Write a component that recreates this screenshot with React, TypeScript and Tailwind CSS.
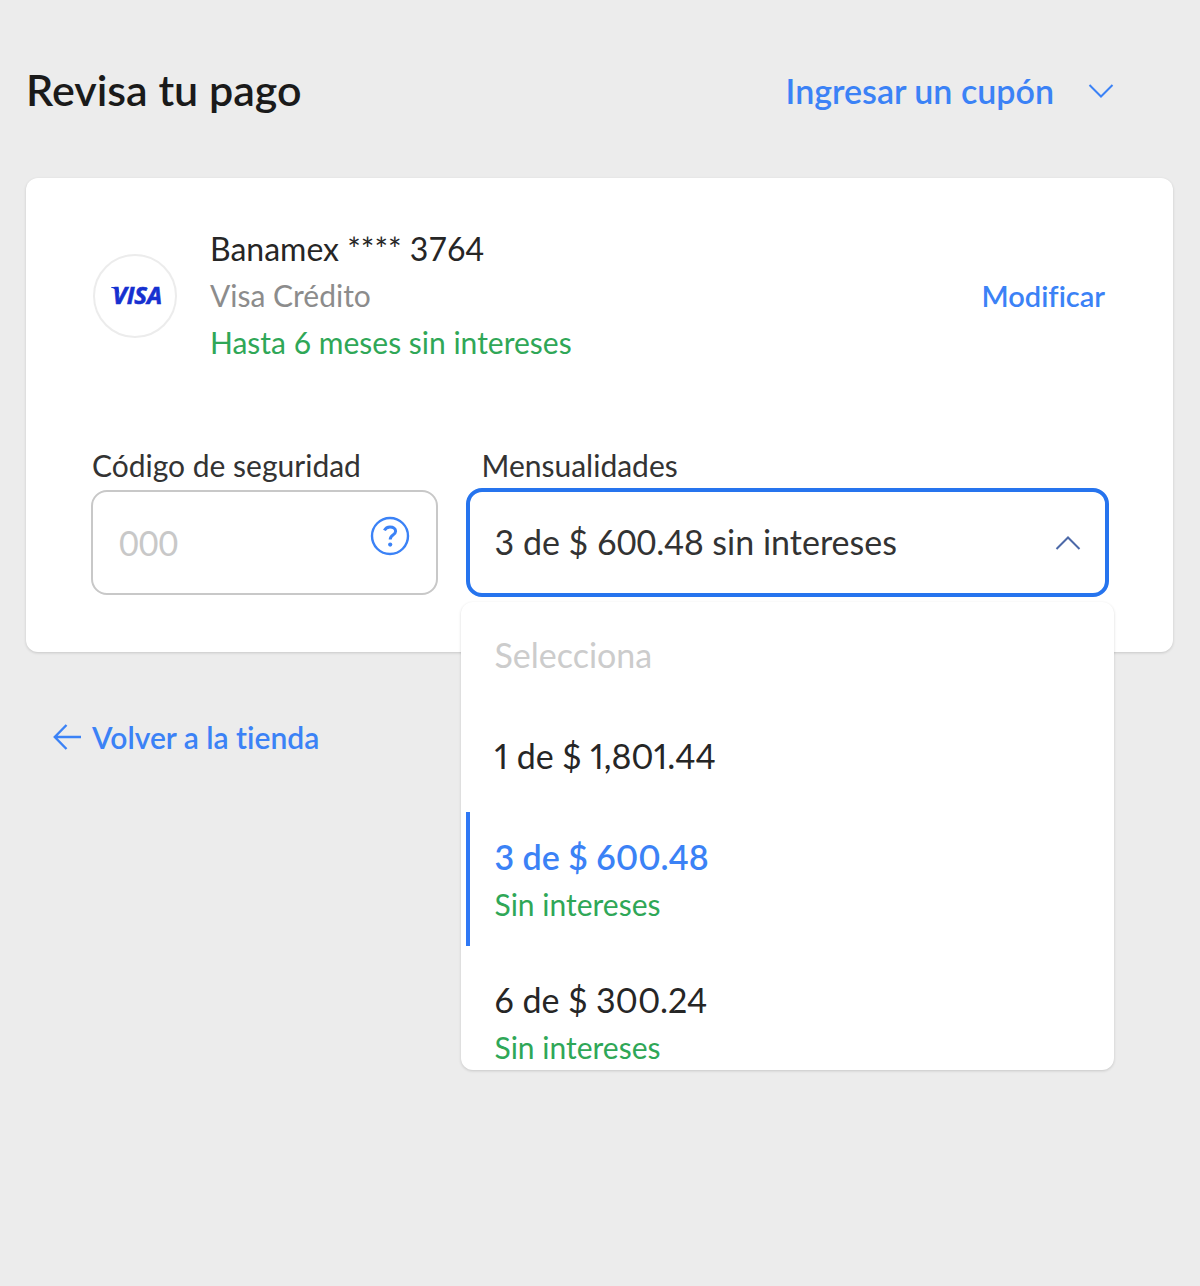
import { useState } from "react";

const options = [
  { value: "1", label: "1 de $ 1,801.44", interestFree: false },
  { value: "3", label: "3 de $ 600.48", interestFree: true },
  { value: "6", label: "6 de $ 300.24", interestFree: true },
];

function Chevron({ up = false, className = "" }: { up?: boolean; className?: string }) {
  return (
    <svg viewBox="0 0 26 16" fill="none" stroke="currentColor" strokeWidth="2" className={className} aria-hidden="true">
      <path d={up ? "M1.5 14 L13 2.5 L24.5 14" : "M1.5 3 L13 14.5 L24.5 3"} />
    </svg>
  );
}

function VisaLogo() {
  return (
    <svg viewBox="0 0 80 80" className="size-full" role="img" aria-label="Visa">
      <path d="M16 31 H23 L24.5 38 Q21.5 33 16 31.6 Z" fill="#1630d0" />
      <text
        x="17.5"
        y="48"
        fill="#1630d0"
        stroke="#1630d0"
        strokeWidth="0.6"
        fontFamily="Open Sans, sans-serif"
        fontSize="24"
        fontWeight="700"
        fontStyle="italic"
      >
        VISA
      </text>
    </svg>
  );
}

function PaymentMethod() {
  return (
    <div className="flex items-center">
      <div className="ml-0.5 size-[84px] shrink-0 rounded-full border-2 border-[#ececec]">
        <VisaLogo />
      </div>
      <div className="ml-[33px] flex-1">
        <p className="text-[32px] leading-[47px] text-[#262626]">Banamex **** 3764</p>
        <p className="text-[30px] leading-[47px] text-[#8c8c8c]">Visa Crédito</p>
        <p className="text-[30px] leading-[47px] text-[#2fa757]">Hasta 6 meses sin intereses</p>
      </div>
      <a href="#modificar" className="mr-1 text-[29px] font-semibold text-[#3b82f6]">
        Modificar
      </a>
    </div>
  );
}

function SecurityCode() {
  return (
    <div>
      <label htmlFor="cvv" className="mb-px block pl-px text-[30px] leading-[48px] text-[#333333]">
        Código de seguridad
      </label>
      <div className="flex h-[105px] items-center rounded-2xl border-2 border-[#c8c8c8] px-[26px]">
        <input
          id="cvv"
          placeholder="000"
          className="w-full min-w-0 flex-1 bg-transparent text-[34px] text-[#333333] outline-none placeholder:text-[#c8c8c8]"
        />
        <button type="button" aria-label="Ayuda" className="mb-3.5 shrink-0 text-[#3b82f6]">
          <svg viewBox="0 0 40 40" fill="none" stroke="currentColor" className="size-10" aria-hidden="true">
            <circle cx="20" cy="20" r="18" strokeWidth="2.4" />
            <path d="M14.4 14.4 C15.6 12 17.6 11 20 11 C23.4 11 25.6 12.7 25.6 15.2 C25.6 19 20.2 18.9 20.2 23.6" strokeWidth="3" />
            <circle cx="20.2" cy="28.6" r="2.1" fill="currentColor" stroke="none" />
          </svg>
        </button>
      </div>
    </div>
  );
}

function Installments() {
  const [selected, setSelected] = useState("3");
  return (
    <div className="relative">
      <label htmlFor="mensualidades" className="mb-px block pl-4 text-[30px] leading-[48px] text-[#333333]">
        Mensualidades
      </label>
      <div className="relative -my-0.5">
        <select
          id="mensualidades"
          value={selected}
          onChange={(e) => setSelected(e.target.value)}
          className="block h-[109px] w-full appearance-none rounded-2xl border-4 border-[#2674ee] bg-white pr-16 pb-0.5 pl-[25px] text-[34px] text-[#333333] outline-none"
        >
          {options.map((o) => (
            <option key={o.value} value={o.value}>
              {o.interestFree ? `${o.label} sin intereses` : o.label}
            </option>
          ))}
        </select>
        <Chevron up className="pointer-events-none absolute top-[47px] right-7 h-4 w-[26px] text-[#4c69a8]" />
      </div>
      <ul
        role="listbox"
        aria-label="Mensualidades"
        className="absolute -inset-x-[5px] top-[161px] flex h-[468px] flex-col gap-[9px] overflow-hidden rounded-xl bg-white px-[5px] pt-2 shadow-[0_1px_3px_rgba(0,0,0,0.16)]"
      >
        <li role="option" aria-disabled="true" aria-selected="false" className="shrink-0 pt-[19px] pb-[21px] pl-[29px] text-[34px] leading-[52px] text-[#cccccc]">
          Selecciona
        </li>
        {options.map((o) => (
          <li
            key={o.value}
            role="option"
            aria-selected={o.value === selected}
            onClick={() => setSelected(o.value)}
            className={`shrink-0 cursor-pointer border-l-4 pt-[19px] pb-[21px] pl-[25px] ${
              o.value === selected ? "border-[#2f78f5]" : "border-transparent"
            }`}
          >
            <p className={`text-[34px] leading-[52px] proportional-nums ${o.value === selected ? "font-semibold text-[#3b82f6]" : "text-[#262626]"}`}>
              {o.label}
            </p>
            {o.interestFree && <p className="text-[30px] leading-[42px] text-[#2fa757]">Sin intereses</p>}
          </li>
        ))}
      </ul>
    </div>
  );
}

export default function App() {
  return (
    <main className="min-h-screen bg-[#ececec] pt-[60px] pr-[27px] pl-[26px] font-['Lato',sans-serif] [font-variant-ligatures:no-common-ligatures]">
      <header className="flex h-[60px] items-center justify-between pr-[59px]">
        <h1 className="text-[43px] font-semibold text-[#1a1a1a]">Revisa tu pago</h1>
        <button type="button" className="flex items-center gap-[34px] text-[34px] font-semibold text-[#3b82f6]">
          Ingresar un cupón
          <Chevron className="h-4 w-[26px]" />
        </button>
      </header>

      <section className="mt-[58px] rounded-xl bg-white pt-[47px] pr-16 pb-[57px] pl-[65px] shadow-[0_1px_3px_rgba(0,0,0,0.16)]">
        <PaymentMethod />
        <div className="mt-[75px] grid grid-cols-[7fr_13fr] gap-7">
          <SecurityCode />
          <Installments />
        </div>
      </section>

      <a href="#tienda" className="mt-[60px] ml-[27px] inline-flex h-[50px] items-center gap-[11px] text-[30px] font-semibold text-[#3b82f6]">
        <svg viewBox="0 0 28 26" fill="none" stroke="currentColor" strokeWidth="2.4" className="h-[26px] w-7" aria-hidden="true">
          <path d="M13.5 1 L1.8 13 L13.5 25 M1.8 13 H28" />
        </svg>
        Volver a la tienda
      </a>
    </main>
  );
}
